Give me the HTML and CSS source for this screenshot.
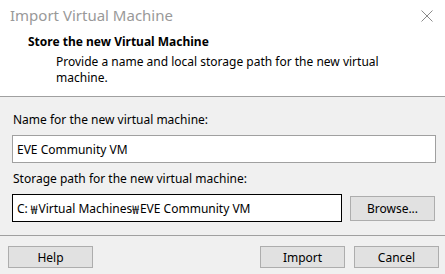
FILE: index.html
```html
<!DOCTYPE html>
<html lang="en">
<head>
  <meta charset="UTF-8">
  <title>Import Virtual Machine</title>
  <link rel="stylesheet" href="styles.css">
</head>
<body>
  <div class="dialog">
    <div class="header">
      <div class="titlebar">
        <span class="title">Import Virtual Machine</span>
        <svg class="close" width="12" height="12" viewBox="0 0 12 12">
          <path d="M0.5 0.5 L11.5 11.5 M11.5 0.5 L0.5 11.5" stroke="#8a8a8a" stroke-width="1" fill="none"/>
        </svg>
      </div>
      <div class="banner">
        <div class="banner-title">Store the new Virtual Machine</div>
        <div class="banner-desc">Provide a name and local storage path for the new virtual machine.</div>
      </div>
    </div>

    <div class="content">
      <label class="field-label">Name for the new virtual machine:</label>
      <div class="textbox">EVE Community VM</div>

      <label class="field-label">Storage path for the new virtual machine:</label>
      <div class="path-row">
        <div class="textbox focused">C:<span class="won first">₩</span>Virtual Machines<span class="won">₩</span>EVE Community VM</div>
        <button class="btn browse">Browse...</button>
      </div>
    </div>

    <div class="footer">
      <button class="btn">Help</button>
      <div class="footer-right">
        <button class="btn">Import</button>
        <button class="btn">Cancel</button>
      </div>
    </div>
  </div>
</body>
</html>
```

FILE: styles.css
```css
* {
  margin: 0;
  padding: 0;
  box-sizing: border-box;
}

body {
  font-family: "Noto Sans", "Noto Sans CJK KR", sans-serif;
  font-size: 12px;
  color: #000;
  background: #f0f0f0;
  width: 445px;
  height: 274px;
  overflow: hidden;
}

.dialog {
  display: flex;
  flex-direction: column;
  height: 274px;
}

.header {
  background: #fff;
  height: 97px;
  border-bottom: 1px solid #a0a0a0;
}

.titlebar {
  height: 34px;
  display: flex;
  align-items: center;
  justify-content: space-between;
  padding: 0 12px 4px 10px;
}

.title {
  font-size: 15px;
  color: #999;
}

.close {
  display: block;
  margin-top: 1px;
}

.banner {
  padding-left: 28px;
  line-height: 16px;
}

.banner-title {
  font-weight: bold;
  margin-bottom: 4px;
}

.banner-desc {
  padding-left: 28px;
  padding-right: 50px;
}

.content {
  padding: 15px 9px 0 12px;
  display: flex;
  flex-direction: column;
  height: 139px;
  border-bottom: 1px solid #a0a0a0;
}

.field-label {
  display: block;
  padding-left: 1px;
  line-height: 16px;
  margin-bottom: 7px;
}

.textbox {
  height: 28px;
  background: #fff;
  border: 1px solid #a0a0a0;
  padding: 0 4px;
  display: flex;
  align-items: center;
  margin-bottom: 8px;
  white-space: pre;
}

.textbox.focused {
  border-color: #000;
  flex: 1;
  margin-bottom: 0;
}

.won {
  font-family: "Noto Sans CJK KR", sans-serif;
  margin-right: 1px;
}

.won.first {
  margin-left: 3px;
}

.path-row {
  display: flex;
  align-items: center;
  gap: 8px;
}

.btn {
  font-family: inherit;
  font-size: 12px;
  color: #000;
  background: #e1e1e1;
  border: 1px solid #adadad;
  width: 85px;
  height: 22px;
}

.browse {
  height: 25px;
  margin-right: 1px;
}

.footer {
  display: flex;
  justify-content: space-between;
  padding: 10px 6px 0 8px;
}

.footer-right {
  display: flex;
  gap: 9px;
}
```
